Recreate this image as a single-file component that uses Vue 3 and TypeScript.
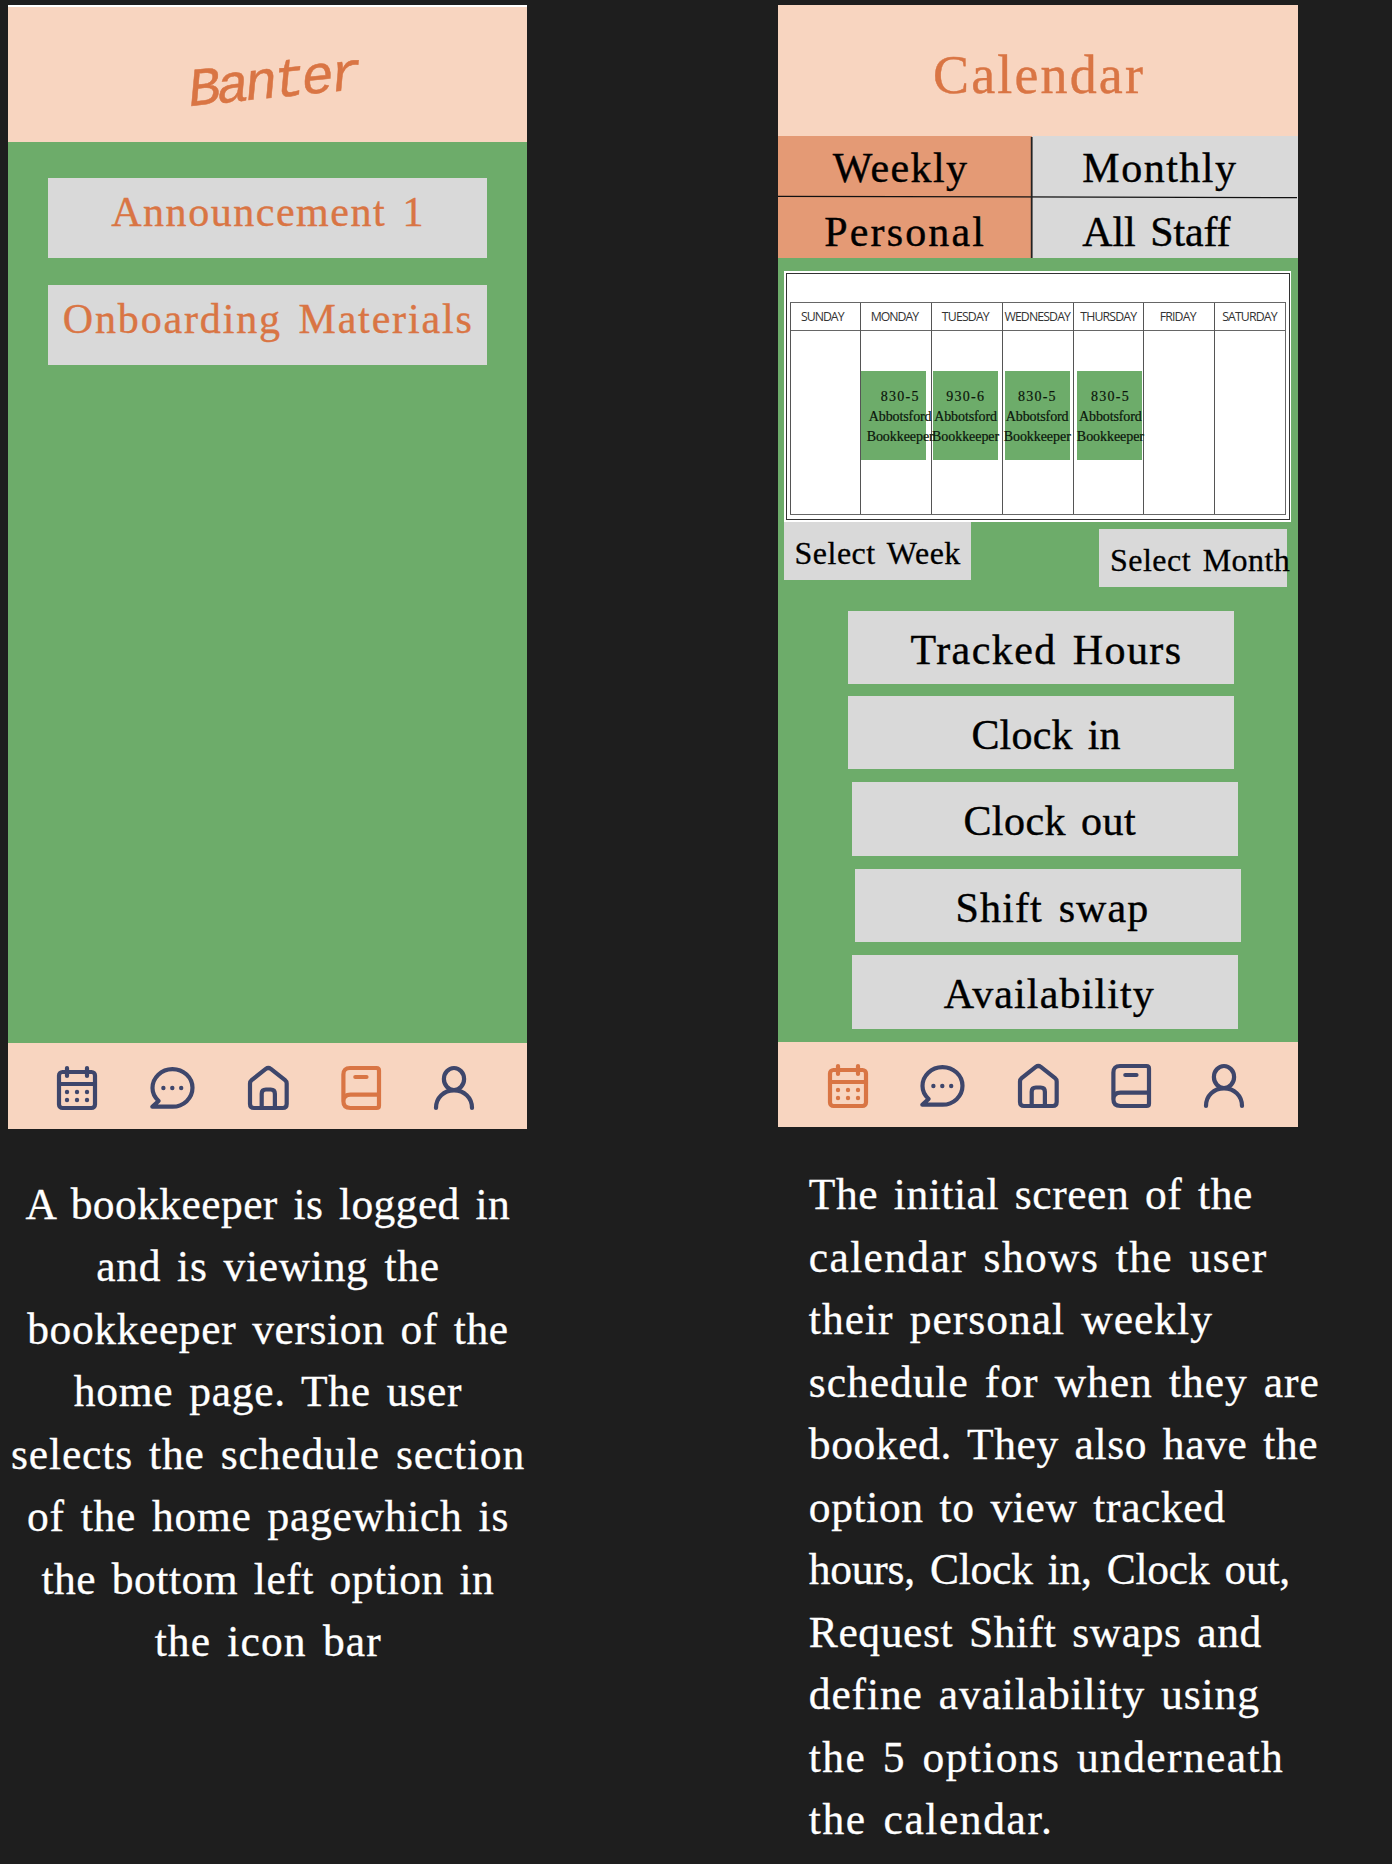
<script setup lang="ts">
import type { Directive } from 'vue'

type IconName = 'calendar' | 'chat' | 'home' | 'book' | 'person'

// Spreads the letters of a single line so that it spans the given width.
const vFit: Directive<HTMLElement, number> = {
  mounted(el, binding) {
    const count = (el.textContent ?? '').trim().length
    if (count < 2) return
    const spacing = (binding.value - el.offsetWidth) / (count - 1)
    el.style.letterSpacing = `${spacing}px`
    el.style.marginRight = `${-spacing}px`
  },
}

const icons: { name: IconName; width: number }[] = [
  { name: 'calendar', width: 40 },
  { name: 'chat', width: 44.7 },
  { name: 'home', width: 40.7 },
  { name: 'book', width: 40 },
  { name: 'person', width: 40 },
]

const navs: Record<'home' | 'calendar', IconName> = { home: 'book', calendar: 'calendar' }

const cards = [
  { text: 'Announcement 1', width: 312 },
  { text: 'Onboarding Materials', width: 409 },
]

const tabs = [
  { text: 'Weekly', width: 134, left: 54.5, active: true },
  { text: 'Monthly', width: 154, left: 50, active: false },
  { text: 'Personal', width: 160, left: 46, active: true },
  { text: 'All Staff', width: 148, left: 50, active: false },
]

interface Day {
  name: string
  width: number
  shift: number
  event?: { time: string; left: number; textShift: number }
}

const days: Day[] = [
  { name: 'SUNDAY', width: 44, shift: -2.8 },
  { name: 'MONDAY', width: 48, shift: -1.3 },
  { name: 'TUESDAY', width: 48, shift: -1.2 },
  { name: 'WEDNESDAY', width: 67, shift: 0 },
  { name: 'THURSDAY', width: 57, shift: 0.3 },
  { name: 'FRIDAY', width: 37, shift: -1 },
  { name: 'SATURDAY', width: 55, shift: 0 },
]
days[1].event = { time: '830-5', left: 0, textShift: 6.3 }
days[2].event = { time: '930-6', left: 1, textShift: 0 }
days[3].event = { time: '830-5', left: 2.2, textShift: -0.3 }
days[4].event = { time: '830-5', left: 3.4, textShift: 1 }

const actions = [
  { text: 'Tracked Hours', width: 270, offset: 69.5, left: 62.8, gap: 12 },
  { text: 'Clock in', width: 149.5, offset: 69.5, left: 123.6, gap: 13 },
  { text: 'Clock out', width: 172.5, offset: 73.3, left: 111.8, gap: 13.4 },
  { text: 'Shift swap', width: 193, offset: 76.3, left: 101, gap: 13 },
  { text: 'Availability', width: 210.5, offset: 73.3, left: 92.2, gap: 0 },
]

const homeNotes = [
  { text: 'A bookkeeper is logged in', width: 484 },
  { text: 'and is viewing the', width: 343 },
  { text: 'bookkeeper version of the', width: 481 },
  { text: 'home page. The user', width: 388 },
  { text: 'selects the schedule section', width: 513 },
  { text: 'of the home pagewhich is', width: 481 },
  { text: 'the bottom left option in', width: 452 },
  { text: 'the icon bar', width: 226 },
]

const calendarNotes = [
  { text: 'The initial screen of the', width: 443 },
  { text: 'calendar shows the user', width: 457 },
  { text: 'their personal weekly', width: 403 },
  { text: 'schedule for when they are', width: 510 },
  { text: 'booked. They also have the', width: 509 },
  { text: 'option to view tracked', width: 416 },
  { text: 'hours, Clock in, Clock out,', width: 481 },
  { text: 'Request Shift swaps and', width: 453 },
  { text: 'define availability using', width: 450 },
  { text: 'the 5 options underneath', width: 474 },
  { text: 'the calendar.', width: 243 },
]
</script>

<template>
  <main class="board">
    <section v-for="(active, screen) in navs" :key="screen" class="column" :class="screen">
      <article class="phone">
        <template v-if="screen === 'home'">
          <header class="header brand">
            <h1 v-fit="174" class="logo">Banter</h1>
          </header>
          <div class="content cards">
            <div v-for="card in cards" :key="card.text" class="card">
              <span v-fit="card.width" class="line">{{ card.text }}</span>
            </div>
          </div>
        </template>

        <template v-else>
          <header class="header">
            <h1 v-fit="210" class="title">Calendar</h1>
          </header>
          <div class="tabs">
            <div
              v-for="tab in tabs"
              :key="tab.text"
              class="tab"
              :class="{ active: tab.active }"
              :style="{ paddingLeft: tab.left + 'px' }"
            >
              <span v-fit="tab.width" class="line">{{ tab.text }}</span>
            </div>
            <svg class="rules" width="519" height="122" viewBox="0 0 519 122">
              <path d="M0 60.4 L519 61.6" stroke="#111" stroke-width="1.3" />
              <path d="M253.7 1 V122" stroke="#222" stroke-width="1.8" />
            </svg>
          </div>
          <div class="content">
            <div class="sheet">
              <div class="frame">
                <div class="grid">
                  <div v-for="day in days" :key="day.name" class="day">
                    <div class="dayname">
                      <span :style="{ marginLeft: day.shift * 2 + 'px' }">
                        <span v-fit="day.width" class="line">{{ day.name }}</span>
                      </span>
                    </div>
                    <div v-if="day.event" class="event" :style="{ marginLeft: day.event.left + 'px' }">
                      <div class="shift" :style="{ marginLeft: day.event.textShift + 'px' }">
                        <span v-fit="38" class="line time">{{ day.event.time }}</span>
                        <span v-fit="63" class="line">Abbotsford</span>
                        <span v-fit="67.5" class="line">Bookkeeper</span>
                      </div>
                    </div>
                  </div>
                </div>
              </div>
            </div>
            <div class="selectors">
              <div class="selector"><span v-fit="166" class="line">Select Week</span></div>
              <div class="selector month"><span v-fit="180" class="line">Select Month</span></div>
            </div>
            <div class="actions">
              <div
                v-for="action in actions"
                :key="action.text"
                class="action"
                :style="{
                  marginLeft: action.offset + 'px',
                  marginBottom: action.gap + 'px',
                  paddingLeft: action.left + 'px',
                }"
              >
                <span v-fit="action.width" class="line">{{ action.text }}</span>
              </div>
            </div>
          </div>
        </template>

        <nav class="nav">
          <svg
            v-for="icon in icons"
            :key="icon.name"
            class="icon"
            :class="{ current: icon.name === active }"
            :width="icon.width"
            height="44"
            :viewBox="`0 0 ${icon.width} 44`"
          >
            <template v-if="icon.name === 'calendar'">
              <rect x="2" y="6" width="36" height="36" rx="3.5" />
              <path d="M2 18H38M10 2V10M30 2V10" />
              <g class="dots">
                <circle v-for="x in [10, 20, 30]" :key="x" :cx="x" cy="26" r="2.2" />
                <circle v-for="x in [10, 20, 30]" :key="x" :cx="x" cy="34" r="2.2" />
              </g>
            </template>
            <template v-else-if="icon.name === 'chat'">
              <path d="M22.5 40.7H2.3L8.6 35C5 31.6 2.5 27.2 2.5 22A20 18.8 0 1 1 22.5 40.7Z" />
              <g class="dots">
                <circle v-for="x in [13.4, 22.3, 31.2]" :key="x" :cx="x" cy="22" r="2.2" />
              </g>
            </template>
            <template v-else-if="icon.name === 'home'">
              <path
                d="M2 17.5Q2 15.5 3.6 14.2L17.8 2.9Q20.3 1.1 22.8 2.9L37.1 14.2Q38.7 15.5 38.7 17.5V38Q38.7 42 34.7 42H6Q2 42 2 38Z"
              />
              <path d="M13.7 42V27.7Q13.7 23.5 17.9 23.5H22.7Q26.9 23.5 26.9 27.7V42" />
            </template>
            <template v-else-if="icon.name === 'book'">
              <path
                d="M9 2H35.5Q38 2 38 4.5V39.5Q38 42 35.5 42H9.5Q2.4 42 2.4 35.3V8.5Q2.4 2 9 2ZM2.4 35.3Q2.4 28.7 9.5 28.7H38M14.3 11H25.5"
              />
            </template>
            <template v-else>
              <ellipse cx="20" cy="13" rx="10.1" ry="11" />
              <path d="M2 42C2 31.5 10 24.4 20 24.4S38 31.5 38 42" />
            </template>
          </svg>
        </nav>
      </article>

      <div class="notes">
        <p v-for="note in screen === 'home' ? homeNotes : calendarNotes" :key="note.text">
          <span v-fit="note.width" class="line">{{ note.text }}</span>
        </p>
      </div>
    </section>
  </main>
</template>

<style>
body {
  margin: 0;
  background: #1e1e1e;
}
</style>

<style scoped>
.board {
  box-sizing: border-box;
  display: flex;
  gap: 251px;
  width: 1392px;
  height: 1864px;
  padding: 5px 0 0 8px;
  overflow: hidden;
  background: #1e1e1e;
  font-family: 'Liberation Serif', serif;
}
.column {
  flex: none;
  width: 519.3px;
}
.phone {
  display: flex;
  flex-direction: column;
  height: 1123.7px;
  background: #6dac6a;
}
.calendar .phone {
  height: 1122.4px;
}
.line {
  display: inline-block;
  flex: none;
  white-space: nowrap;
  word-spacing: 0.1em;
}
.header {
  display: flex;
  justify-content: center;
  box-sizing: border-box;
  height: 131px;
  flex: none;
  background: #f8d5c0;
  color: #d97544;
}
.brand {
  justify-content: flex-start;
  height: 137px;
  padding: 60px 0 0 182px;
  border-top: 2px solid #fff;
}
.logo {
  height: 54px;
  margin: -2px 0 0;
  font: italic 400 54px/54px 'Liberation Mono', monospace;
  transform: rotate(-5.8deg);
  transform-origin: 0 41.4px;
  white-space: nowrap;
  -webkit-text-stroke: 0.5px currentColor;
}
.title {
  margin: 0;
  font-size: 54px;
  font-weight: 400;
  line-height: 140.6px;
  height: 131px;
  white-space: nowrap;
  -webkit-text-stroke: 0.4px currentColor;
}
.content {
  flex: 1;
}
.cards {
  display: flex;
  flex-direction: column;
  align-items: center;
  gap: 26.7px;
  padding-top: 36px;
}
.card {
  display: flex;
  justify-content: center;
  width: 439px;
  height: 80px;
  margin-right: 0.6px;
  background: #d9d9d9;
  color: #d97544;
  font-size: 42px;
  line-height: 68px;
  -webkit-text-stroke: 0.4px currentColor;
}
.tabs {
  position: relative;
  display: grid;
  grid-template-columns: 254px 1fr;
  grid-template-rows: 61px 61px;
  flex: none;
}
.tab {
  display: flex;
  background: #d9d9d9;
  font-size: 42px;
  line-height: 65px;
  -webkit-text-stroke: 0.4px currentColor;
}
.tab:nth-child(n + 3) {
  line-height: 70.6px;
}
.tab.active {
  background: #e49a75;
}
.rules {
  position: absolute;
  inset: 0;
}
.sheet {
  box-sizing: border-box;
  width: 507px;
  height: 251px;
  margin: 13px 0 0 5.4px;
  padding: 2px;
  background: #fff;
}
.frame {
  box-sizing: border-box;
  height: 247px;
  width: 504px;
  padding: 28px 3px 0;
  border: 1px solid #333;
}
.grid {
  box-sizing: border-box;
  display: grid;
  grid-template-columns: repeat(7, 1fr);
  width: 496px;
  height: 213px;
  border: 1px solid #666;
  border-left: 0;
}
.day {
  min-width: 0;
  border-left: 1px solid #555;
}
.dayname {
  display: flex;
  justify-content: center;
  height: 27px;
  border-bottom: 1px solid #666;
  color: #333;
  font-family: 'Open Sans', sans-serif;
  font-size: 12.3px;
  line-height: 28.5px;
}
.event {
  width: 65px;
  height: 89px;
  margin-top: 40px;
  background: #6dac6a;
}
.shift {
  position: relative;
  z-index: 1;
  display: flex;
  flex-direction: column;
  align-items: center;
  width: 65px;
  padding-top: 15.5px;
  color: #0b160b;
  font-size: 14px;
  line-height: 20px;
  -webkit-text-stroke: 0.2px currentColor;
}
.time {
  margin-left: -1px;
}
.selectors {
  display: flex;
  justify-content: space-between;
  padding: 0 10.6px 0 5.4px;
}
.selector {
  display: flex;
  box-sizing: border-box;
  width: 187.7px;
  height: 58.3px;
  padding-left: 10.8px;
  background: #d9d9d9;
  font-size: 32px;
  line-height: 62px;
  -webkit-text-stroke: 0.3px currentColor;
}
.month {
  margin-top: 6.5px;
}
.actions {
  padding-top: 24px;
}
.action {
  display: flex;
  box-sizing: border-box;
  width: 386.2px;
  height: 73.3px;
  background: #d9d9d9;
  font-size: 42px;
  line-height: 78.7px;
  -webkit-text-stroke: 0.4px currentColor;
}
.nav {
  display: flex;
  flex: none;
  gap: 52.8px;
  box-sizing: border-box;
  height: 85.3px;
  padding: 22.4px 0 0 49.4px;
  background: #f8d5c0;
}
.icon {
  flex: none;
  overflow: visible;
  fill: none;
  stroke: #3e466b;
  stroke-width: 4.2;
  stroke-linecap: round;
  stroke-linejoin: round;
}
.icon.current {
  stroke: #d97544;
}
.dots {
  fill: #3e466b;
  stroke: none;
}
.current .dots {
  fill: #d97544;
}
.notes {
  padding-top: 44px;
  color: #fff;
  font-size: 43.5px;
  line-height: 62.5px;
  -webkit-text-stroke: 0.3px currentColor;
}
.notes p {
  display: flex;
  justify-content: center;
  height: 62.5px;
  margin: 0;
}
.calendar .notes {
  padding: 36px 0 0 30.5px;
}
.calendar .notes p {
  justify-content: flex-start;
}
</style>
